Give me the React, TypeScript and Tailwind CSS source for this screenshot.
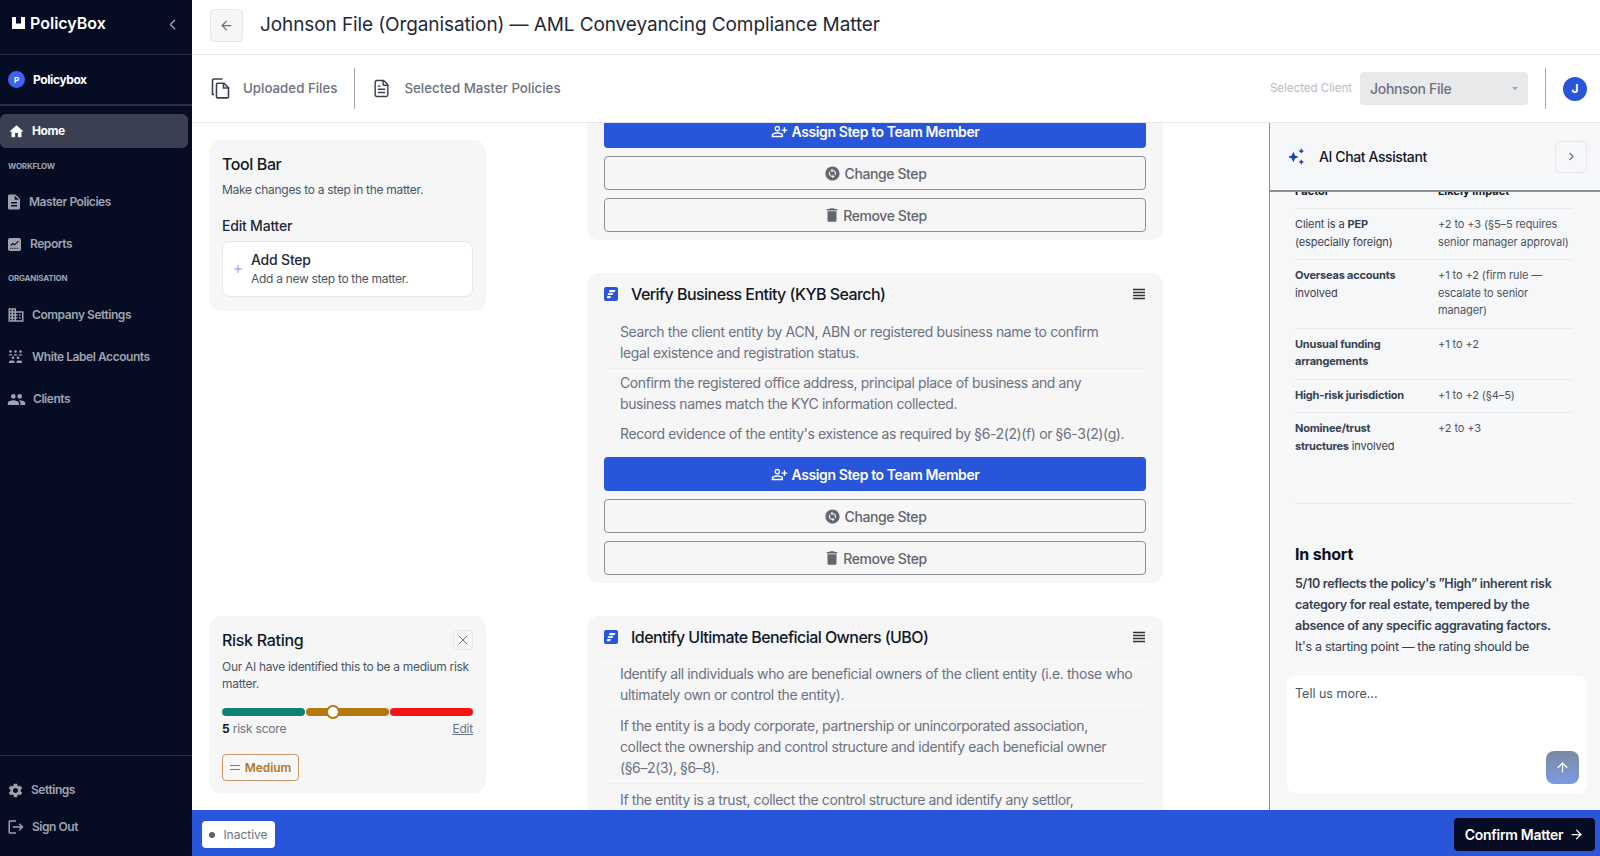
import React from "react";
import { ArrowLeft, ChevronLeft, ChevronRight, Plus, X, ArrowUp, ArrowRight, FileText } from "lucide-react";
import { MdHome, MdDescription, MdOutlineBusiness, MdPeople, MdSettings, MdLogout, MdOutlinePersonAddAlt, MdChangeCircle, MdDelete } from "react-icons/md";

const F = { fontFamily: "Inter, 'Liberation Sans', sans-serif" };

function NavItem({ icon, label, className = "", box }: { icon: React.ReactNode; label: string; className?: string; box: string }) {
  return (
    <div className={`flex items-center gap-[9px] pl-2 text-[12px] font-semibold tracking-[-0.45px] text-[#9ea3ae] ${className}`}>
      <span className={`flex h-[18px] items-center justify-center ${box}`}>{icon}</span>
      <span>{label}</span>
    </div>
  );
}

function ReportsIcon() {
  return (
    <svg width="13" height="13" viewBox="0 0 13 13" className="shrink-0">
      <rect width="13" height="13" rx="2" fill="#9ea3ae" />
      <path d="M2.500 7.500 5 5.500 6.500 6.800 10.500 3.200" stroke="#050c24" strokeWidth="1.100" fill="none" />
      <path d="M2 10.300h9" stroke="#050c24" strokeWidth="1" strokeDasharray="1 .8" fill="none" />
    </svg>
  );
}

function WhiteLabelIcon() {
  return (
    <svg width="15" height="14" viewBox="0 0 15 14" fill="#9ea3ae" className="shrink-0">
      <circle cx="2.500" cy="1.500" r="1.300" /><circle cx="7.500" cy="1.500" r="1.300" /><circle cx="12.500" cy="1.500" r="1.300" />
      <path d="M0.500 5.500C0.500 3.800 4.500 3.800 4.500 5.500ZM5.500 5.500C5.500 3.800 9.500 3.800 9.500 5.500ZM10.500 5.500C10.500 3.800 14.500 3.800 14.500 5.500Z" />
      <circle cx="5" cy="7.800" r="1.300" /><circle cx="10" cy="7.800" r="1.300" />
      <path d="M1 13V11.500C1 10 6.500 10 6.500 11.500V13ZM8.500 13V11.500C8.500 10 14 10 14 11.500V13Z" />
    </svg>
  );
}

function FilesIcon() {
  return (
    <svg width="19" height="21" viewBox="0 0 19 21" fill="none" stroke="#374151" strokeWidth="1.600" className="shrink-0">
      <path d="M3 16.500H1.500V2.500a1.500 1.500 0 0 1 1.500-1.500h8.500" />
      <path d="M5.500 6.500a1.200 1.200 0 0 1 1.200-1.200h6.300l4.500 4.500v8.900a1.200 1.200 0 0 1-1.200 1.200H6.700a1.200 1.200 0 0 1-1.200-1.200Z" />
      <path d="M12.500 5.500v4.500h5" />
    </svg>
  );
}

function Menu4() {
  return (
    <svg width="14" height="12" viewBox="0 0 14 12" className="text-[#333]">
      <path d="M1 1.500h12M1 4.500h12M1 7.500h12M1 10.500h12" stroke="currentColor" strokeWidth="1.300" />
    </svg>
  );
}

function StepIcon() {
  return (
    <svg width="14" height="14" viewBox="0 0 14 14" className="shrink-0">
      <rect width="14" height="14" rx="2" fill="#2855d9" />
      <path d="M5.500 3H11.500L10.500 5.200H5ZM4.200 6.200H9.300L8.500 8H3.500ZM3.300 9H7L6 11.200H2.800Z" fill="#fff" />
    </svg>
  );
}

function Buttons() {
  return (
    <>
      <div className="flex h-[34px] items-center justify-center gap-1 rounded bg-[#2855d9] text-[14px] font-semibold tracking-[-0.4px] text-white">
        <MdOutlinePersonAddAlt className="text-[17px]" />
        Assign Step to Team Member
      </div>
      <div className="mt-[8px] flex h-[34px] items-center justify-center gap-1 rounded border border-[#8b8f96] text-[14px] font-medium tracking-[-0.4px] text-[#62666e]">
        <MdChangeCircle className="text-[17px]" />
        Change Step
      </div>
      <div className="mt-[8px] flex h-[34px] items-center justify-center gap-[2px] rounded border border-[#8b8f96] text-[14px] font-medium tracking-[-0.4px] text-[#62666e]">
        <MdDelete className="text-[18px]" />
        Remove Step
      </div>
    </>
  );
}

const rows: [React.ReactNode, string][] = [
  [<>Client is a <b className="font-bold tracking-[-0.2px]">PEP</b><br />(especially foreign)</>, "+2 to +3 (§5–5 requires senior manager approval)"],
  [<><b className="font-bold tracking-[-0.2px]">Overseas accounts</b> involved</>, "+1 to +2 (firm rule — escalate to senior manager)"],
  [<b className="font-bold tracking-[-0.2px]">Unusual funding arrangements</b>, "+1 to +2"],
  [<b className="font-bold tracking-[-0.2px]">High-risk jurisdiction</b>, "+1 to +2 (§4–5)"],
  [<><b className="font-bold tracking-[-0.2px]">Nominee/trust<br />structures</b> involved</>, "+2 to +3"],
];

export default function App() {
  return (
    <div style={F} className="flex h-[856px] w-[1600px] overflow-hidden bg-white text-[#111827]">
      <aside className="flex w-[192px] shrink-0 flex-col bg-[#050c24]">
        <div className="flex h-[55px] shrink-0 items-start justify-between border-b border-[#2a3040] pl-3 pr-[11px] pt-3">
          <div className="flex items-center gap-[5px] text-[16px] font-semibold leading-[22px] text-white">
            <svg width="13" height="12" viewBox="0 0 13 12"><path d="M0 0h4v6.500h5V0h4v12H0Z" fill="#fff" /></svg>
            PolicyBox
          </div>
          <ChevronLeft size={17} className="mt-[4px] text-[#9ea3ae]" />
        </div>
        <div className="flex h-[51px] shrink-0 items-center gap-2 border-b-2 border-[#2a3040] pl-2">
          <span className="flex h-[17px] w-[17px] items-center justify-center rounded-full bg-[#3d63f2] text-[8px] font-bold text-white">P</span>
          <span className="text-[12px] font-bold tracking-[-0.4px] text-white">Policybox</span>
        </div>
        <div className="mr-1 mt-2 flex h-[34px] items-center gap-[7px] rounded-md bg-[#3a4052] pl-2 text-[12px] font-bold tracking-[-0.4px] text-white">
          <MdHome className="text-[17px]" />
          Home
        </div>
        <div className="mt-[12px] pl-2 text-[8px] font-bold tracking-[-0.2px] text-[#9ea3ae]">WORKFLOW</div>
        <NavItem className="mt-[21px]" box="w-[12px]" icon={<MdDescription className="shrink-0 text-[18px]" />} label="Master Policies" />
        <NavItem className="mt-[24px]" box="w-[13px]" icon={<ReportsIcon />} label="Reports" />
        <div className="mt-[19px] pl-2 text-[8px] font-bold tracking-[-0.2px] text-[#9ea3ae]">ORGANISATION</div>
        <NavItem className="mt-[22px]" box="w-[15px]" icon={<MdOutlineBusiness className="shrink-0 text-[18px]" />} label="Company Settings" />
        <NavItem className="mt-[24px]" box="w-[15px]" icon={<WhiteLabelIcon />} label="White Label Accounts" />
        <NavItem className="mt-[24px]" box="w-[16px]" icon={<MdPeople className="shrink-0 text-[19px]" />} label="Clients" />
        <div className="mt-auto h-[101px] border-t border-[#2a3040]">
          <NavItem className="mt-[25px]" box="w-[14px]" icon={<MdSettings className="shrink-0 text-[17px]" />} label="Settings" />
          <NavItem className="mt-[19px]" box="w-[15px]" icon={<MdLogout className="shrink-0 text-[18px]" />} label="Sign Out" />
        </div>
      </aside>

      <div className="flex min-w-0 flex-1 flex-col">
        <header className="flex h-[55px] shrink-0 items-center border-b border-[#e5e7eb] pb-1 pl-[18px]">
          <div className="flex h-[33px] w-[33px] items-center justify-center rounded border border-[#e5e7eb] bg-[#f6f6f6] text-[#6b7280]">
            <ArrowLeft size={15} />
          </div>
          <h1 className="ml-[17px] mt-[1px] text-[19px] font-normal tracking-[-0.1px] text-[#1f2937]">Johnson File (Organisation) — AML Conveyancing Compliance Matter</h1>
        </header>

        <div className="flex h-[68px] shrink-0 items-center border-b border-[#e5e7eb] pl-[19px] pr-[13px]">
          <FilesIcon />
          <span className="ml-[13px] text-[13.300px] font-medium text-[#6b7280]">Uploaded Files</span>
          <span className="ml-[17px] h-[41px] w-px bg-[#a3a7ae]" />
          <FileText size={19} strokeWidth={1.800} className="ml-[17px] text-[#374151]" />
          <span className="ml-[13px] text-[13.300px] font-medium text-[#6b7280]">Selected Master Policies</span>
          <span className="ml-auto text-[11.500px] text-[#b9bcc2]">Selected Client</span>
          <div className="ml-2 flex h-[33px] w-[168px] items-center justify-between rounded bg-[#e8e9ea] px-[10px] text-[14px] font-medium tracking-[-0.3px] text-[#6b7280]">
            Johnson File
            <span className="h-0 w-0 border-x-[3px] border-t-[3px] border-x-transparent border-t-[#9ca3af]" />
          </div>
          <span className="ml-[17px] h-[41px] w-px bg-[#a3a7ae]" />
          <span className="ml-[17px] flex h-6 w-6 items-center justify-center rounded-full bg-[#2855d9] text-[12px] font-bold text-white">J</span>
        </div>

        <div className="flex min-h-0 flex-1 overflow-hidden">
          <div className="w-[395px] shrink-0 pl-[17px] pt-[17px]">
            <section className="h-[171px] w-[277px] rounded-xl bg-[#f6f6f7] px-[13px] pt-[12px]">
              <h2 className="text-[16px] font-medium leading-6 tracking-[-0.4px] text-[#111827]">Tool Bar</h2>
              <p className="mt-[5px] text-[12px] leading-[18px] tracking-[-0.3px] text-[#4b5563]">Make changes to a step in the matter.</p>
              <h3 className="mt-[17px] text-[14px] font-medium leading-5 tracking-[-0.2px] text-[#1f2937]">Edit Matter</h3>
              <div className="mt-[5px] flex h-[56px] items-center rounded-lg border border-[#e5e7eb] bg-white pl-[9px]">
                <Plus size={12} className="text-[#7d8fe6]" />
                <div className="ml-[7px]">
                  <div className="text-[14px] font-medium leading-[18px] tracking-[-0.2px] text-[#1f2937]">Add Step</div>
                  <div className="mt-[1px] text-[12px] leading-[18px] tracking-[-0.3px] text-[#4b5563]">Add a new step to the matter.</div>
                </div>
              </div>
            </section>
            <section className="mt-[305px] h-[177px] w-[277px] rounded-xl bg-[#f6f6f7] px-[13px] pt-[12px]">
              <div className="flex items-center justify-between">
                <h2 className="text-[16px] font-medium leading-6 tracking-[-0.3px] text-[#111827]">Risk Rating</h2>
                <span className="flex h-5 w-5 items-center justify-center rounded border border-[#e5e7eb] text-[#6b7280]"><X size={16} strokeWidth={1.500} /></span>
              </div>
              <p className="mt-[6px] text-[12px] leading-[17px] tracking-[-0.3px] text-[#4b5563]">Our AI have identified this to be a medium risk matter.</p>
              <div className="relative mt-[16px] flex h-2 gap-px">
                <span className="flex-1 rounded-full bg-[#0d8170]" />
                <span className="flex-1 rounded-full bg-[#b5790f]" />
                <span className="flex-1 rounded-full bg-[#ef1515]" />
                <span className="absolute left-[104px] top-[-3px] h-[14px] w-[14px] rounded-full border-2 border-[#b5790f] bg-white" />
              </div>
              <div className="mt-[5px] flex justify-between text-[12px] leading-4 tracking-[-0.2px] text-[#6b7280]">
                <span><b className="font-bold text-[#111827]">5</b> risk score</span>
                <span className="underline">Edit</span>
              </div>
              <div className="mt-[17px] inline-flex h-[27px] w-[77px] items-center justify-center gap-[5px] rounded border border-[#c9966b] text-[12px] font-semibold tracking-[-0.1px] text-[#b5762a]">
                <span className="h-[5px] w-[10px] border-y border-[#b5762a]" />
                Medium
              </div>
            </section>
          </div>

          <div className="w-[576px] shrink-0">
            <section className="-mt-[9px] rounded-xl bg-[#f6f6f7] px-[17px] pb-2">
              <Buttons />
            </section>
            <section className="mt-[33px] rounded-xl bg-[#f6f6f7] px-[17px] pb-2">
              <div className="flex h-[41px] items-center">
                <StepIcon />
                <h2 className="ml-[13px] flex-1 text-[16px] font-medium tracking-[-0.55px] text-[#111827]">Verify Business Entity (KYB Search)</h2>
                <Menu4 />
              </div>
              <div className="mt-[7px] text-[14px] leading-[21px] tracking-[-0.38px] text-[#6b7280]">
                <p className="border-b border-[#eeeeef] pb-[5px] pl-4 pr-[30px]">Search the client entity by ACN, ABN or registered business name to confirm legal existence and registration status.</p>
                <p className="mt-[3px] pb-[5px] pl-4 pr-[30px]">Confirm the registered office address, principal place of business and any business names match the KYC information collected.</p>
                <p className="mt-[4px] pl-4">Record evidence of the entity's existence as required by §6-2(2)(f) or §6-3(2)(g).</p>
              </div>
              <div className="mt-[13px]"><Buttons /></div>
            </section>
            <section className="mt-[33px] h-[300px] rounded-xl bg-[#f6f6f7] px-[17px]">
              <div className="-mx-[7px] flex h-[42px] items-center border-b border-[#eeeeef] px-[7px]">
                <StepIcon />
                <h2 className="ml-[13px] flex-1 text-[16px] font-medium tracking-[-0.55px] text-[#111827]">Identify Ultimate Beneficial Owners (UBO)</h2>
                <Menu4 />
              </div>
              <div className="mt-[5px] text-[14px] leading-[21px] tracking-[-0.38px] text-[#6b7280]">
                <p className="border-b border-[#eeeeef] pb-[5px] pl-4 pr-[10px]">Identify all individuals who are beneficial owners of the client entity (i.e. those who ultimately own or control the entity).</p>
                <p className="mt-[4px] border-b border-[#eeeeef] pb-[5px] pl-4 pr-[16px]">If the entity is a body corporate, partnership or unincorporated association, collect the ownership and control structure and identify each beneficial owner (§6–2(3), §6–8).</p>
                <p className="mt-[5px] pl-4">If the entity is a trust, collect the control structure and identify any settlor,</p>
              </div>
            </section>
          </div>

          <aside className="relative ml-[106px] flex w-[331px] shrink-0 flex-col border-l border-[#8b8f96] bg-[#f6f7f8]">
            <div className="flex h-[69px] shrink-0 items-center border-b-2 border-[#8b8f96] pl-[17px] pr-[13px]">
              <svg width="18" height="17" viewBox="0 0 17 16" className="text-[#1d43b8]">
                <path fill="currentColor" d="M6 3.500 7.600 7 11 8.500 7.600 10 6 13.500 4.400 10 1 8.500 4.400 7ZM13.500 0 14.400 2 16.300 2.800 14.400 3.700 13.500 5.500 12.600 3.700 10.800 2.800 12.600 2ZM13.500 10.500 14.400 12.300 16.300 13.200 14.400 14 13.500 16 12.600 14 10.800 13.200 12.600 12.300Z" />
              </svg>
              <span className="ml-[14px] flex-1 text-[14px] font-medium tracking-[-0.4px] text-[#111827]">AI Chat Assistant</span>
              <span className="flex h-8 w-8 items-center justify-center rounded border border-[#e5e7eb] text-[#6b7280]"><ChevronRight size={13} /></span>
            </div>
            <div className="min-h-0 flex-1 overflow-hidden pl-[25px] pr-[27px]">
              <div className="-mt-[9px] grid grid-cols-[143px_135px] border-b border-[#e9eaec] pb-[8px] text-[11px] font-bold leading-[17px] text-[#111827]">
                <span>Factor</span><span>Likely impact</span>
              </div>
              {rows.map(([a, b], i) => (
                <div key={i} className={`grid grid-cols-[143px_135px] pb-[8px] pt-[7px] text-[11px] leading-[17.500px] tracking-[-0.1px] text-[#4b5563] ${i < 4 ? "border-b border-[#e9eaec]" : ""}`}>
                  <span className="pr-2 text-[#374151]">{a}</span><span>{b}</span>
                </div>
              ))}
              <div className="h-[41px] border-b border-[#e9eaec]" />
              <h2 className="mt-[38px] text-[16px] font-bold leading-6 tracking-[-0.2px] text-[#0b1020]">In short</h2>
              <p className="mt-[7px] text-[12.500px] leading-[21px] tracking-[-0.3px] text-[#374151]">
                <b className="font-semibold">5/10 reflects the policy's ”High” inherent risk category for real estate, tempered by the absence of any specific aggravating factors.</b><br />It's a starting point — the rating should be
              </p>
            </div>
            <div className="mb-[17px] ml-[17px] mr-[13px] mt-[15px] flex h-[117px] shrink-0 flex-col rounded-lg bg-white px-2 pt-[9px]">
              <span className="text-[12.500px] text-[#4b5563]">Tell us more...</span>
              <span className="mb-[9px] mt-auto flex h-[33px] w-[33px] items-center justify-center self-end rounded-lg bg-gradient-to-b from-[#7a8aa4] to-[#7c9ae2] text-white"><ArrowUp size={15} /></span>
            </div>
          </aside>
        </div>

        <footer className="flex h-[46px] shrink-0 items-center justify-between bg-[#2855d9] pl-[10px] pr-[5px] pt-[3px]">
          <div className="flex h-[27px] w-[73px] items-center justify-center gap-[8px] rounded bg-white text-[12px] text-[#6b7280]">
            <span className="h-[6px] w-[6px] rounded-full bg-[#5d6068]" />
            Inactive
          </div>
          <div className="flex h-[33px] w-[141px] items-center justify-center gap-[6px] rounded bg-[#050c24] text-[14px] font-semibold tracking-[-0.3px] text-white">
            Confirm Matter
            <ArrowRight size={15} />
          </div>
        </footer>
      </div>
    </div>
  );
}
